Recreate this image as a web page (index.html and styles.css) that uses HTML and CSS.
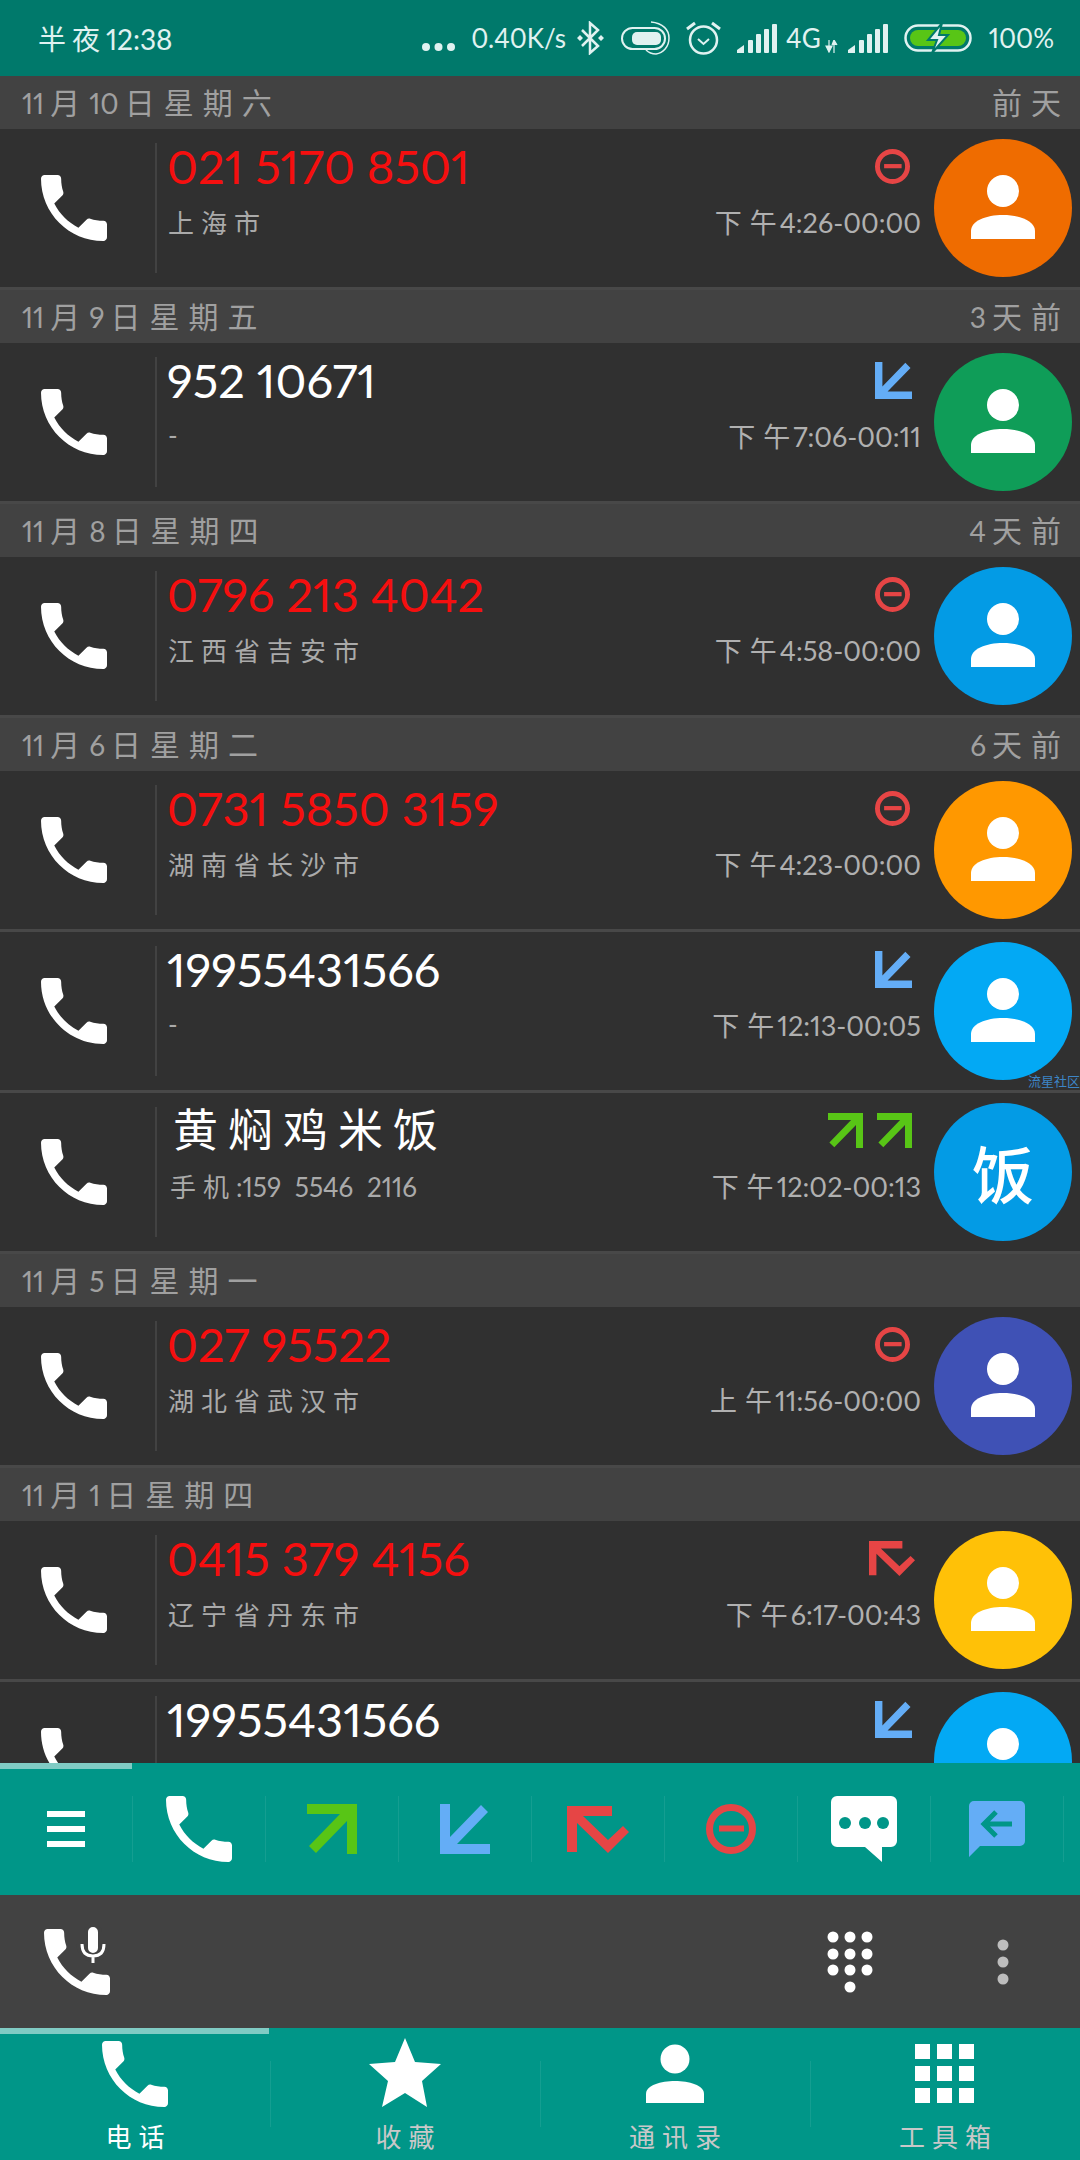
FILE: index.html
```html
<!DOCTYPE html>
<html lang="zh-CN">
<head>
    <meta charset="UTF-8">
    <meta name="viewport" content="width=device-width, initial-scale=1.0">
    <title>通话记录</title>
    <link rel="stylesheet" href="styles.css">
</head>
<body>
    <svg class="defs" width="0" height="0">
        <symbol id="phone" viewBox="3 3 18 18"><path d="M6.62 10.79c1.44 2.83 3.76 5.14 6.59 6.59l2.2-2.2c.27-.27.67-.36 1.02-.24 1.12.37 2.33.57 3.57.57.55 0 1 .45 1 1V20c0 .55-.45 1-1 1-9.39 0-17-7.61-17-17 0-.55.45-1 1-1h3.5c.55 0 1 .45 1 1 0 1.25.2 2.45.57 3.57.11.35.03.74-.25 1.02l-2.2 2.2z" fill="#fff"/></symbol>
        <symbol id="person" viewBox="0 0 138 138"><circle cx="69" cy="52" r="16" fill="#fff"/><path d="M37 100V92C37 82 52 76 69 76S101 82 101 92V100Z" fill="#fff"/></symbol>
        <symbol id="out" viewBox="0 0 50 50"><path d="M0 0H50V50H40V17L9 49L2 42L33 10H0Z" fill="#58c516"/></symbol>
        <symbol id="in" viewBox="0 0 50 50"><path d="M50 50H0V0H10V33L41 1L48 8L17 40H50Z" fill="#64adf6"/></symbol>
        <symbol id="missed" viewBox="0 0 62 47"><path d="M0 0H45V10H16L41 34L56 20L62 26L41 47L10 17V46H0Z" fill="#e64545"/></symbol>
        <symbol id="blocked" viewBox="0 0 50 50"><circle cx="25" cy="25" r="21.5" fill="none" stroke="#e64545" stroke-width="7"/><rect x="13" y="21.500" width="25" height="6" fill="#e64545"/></symbol>
        <symbol id="signal" viewBox="0 0 40 29"><path d="M0 29V26L7 21V29Z" fill="#e0f2f1"/><rect x="11" y="16" width="5" height="13" rx="1" fill="#e0f2f1"/><rect x="19" y="10" width="5" height="19" rx="1" fill="#e0f2f1"/><rect x="27" y="5" width="5" height="24" rx="1" fill="#e0f2f1"/><rect x="35" y="0" width="5" height="29" rx="1" fill="#e0f2f1"/></symbol>
    </svg>

    <header class="status-bar">
        <div class="status-time"><span class="cn">半夜</span>12:38</div>
        <div class="status-icons">
            <svg width="35" height="10" viewBox="0 0 35 10"><circle cx="5" cy="5" r="4" fill="#e0f2f1"/><circle cx="17.500" cy="5" r="4" fill="#e0f2f1"/><circle cx="30" cy="5" r="4" fill="#e0f2f1"/></svg>
            <span class="status-speed">0.40K/s</span>
            <svg width="29" height="34" viewBox="0 0 29 34"><path d="M6 9L22 25L14 32V2L22 9L6 25" fill="none" stroke="#e0f2f1" stroke-width="2.500"/><path d="M1 17L4 14L7 17L4 20ZM22 17L25 14L28 17L25 20Z" fill="#e0f2f1"/></svg>
            <svg width="50" height="34" viewBox="0 0 50 34"><rect x="1" y="7" width="43" height="21" rx="10.500" fill="none" stroke="#e0f2f1" stroke-width="2"/><rect x="11" y="11" width="29" height="13" rx="5" fill="#e0f2f1"/><path d="M30 1C42 2 48 9 48 17C48 26 42 32 35 33C31 33 28 32 25 29" fill="none" stroke="#e0f2f1" stroke-width="1.500"/></svg>
            <svg width="35" height="34" viewBox="0 0 35 34"><circle cx="17.500" cy="19" r="13.500" fill="none" stroke="#e0f2f1" stroke-width="2.500"/><path d="M12 18L17.500 23L23 18" fill="none" stroke="#e0f2f1" stroke-width="2"/><path d="M1 8L9 2M34 8L26 2" stroke="#e0f2f1" stroke-width="3"/></svg>
            <svg class="signal" width="40" height="29"><use href="#signal"/></svg>
            <span class="status-4g">4G</span>
            <svg class="status-arrows" width="13" height="13" viewBox="0 0 13 13"><path d="M4 0V9M1 6L4 12L7 6ZM9 13V1M7 5L9 0L12 5" fill="#e0f2f1" stroke="#e0f2f1" stroke-width="1.200"/></svg>
            <svg class="signal" width="40" height="29"><use href="#signal"/></svg>
            <svg class="status-battery" width="68" height="30" viewBox="0 0 68 30"><rect x="1.500" y="2.500" width="65" height="25" rx="12.500" fill="none" stroke="#e0f2f1" stroke-width="2.500"/><rect x="6" y="7" width="56" height="16" rx="8" fill="#58c516"/><path d="M38 0L24 17H33L28 30L44 12H35Z" fill="#e0f2f1" stroke="#00796b" stroke-width="2"/></svg>
            <span class="status-battery-text">100%</span>
        </div>
    </header>

    <main class="log">
        <div class="day"><span>11<span class="cn">月</span>10<span class="cn">日星期六</span></span><span><span class="cn">前天</span></span></div>
        <div class="row">
            <div class="row-call"><svg width="66" height="66"><use href="#phone"/></svg></div>
            <div class="row-info">
                <div class="row-top"><span class="number missed-text">021 5170 8501</span><svg class="kind" width="35" height="35"><use href="#blocked"/></svg></div>
                <div class="row-bottom"><span class="place"><span class="cn">上海市</span></span><span class="time"><span class="cn">下午</span>4:26-00:00</span></div>
            </div>
            <div class="avatar orange"><svg width="138" height="138"><use href="#person"/></svg></div>
        </div>

        <div class="day"><span>11<span class="cn">月</span>9<span class="cn">日星期五</span></span><span>3<span class="cn">天前</span></span></div>
        <div class="row">
            <div class="row-call"><svg width="66" height="66"><use href="#phone"/></svg></div>
            <div class="row-info">
                <div class="row-top"><span class="number">952 10671</span><svg class="kind kind-in" width="37" height="37"><use href="#in"/></svg></div>
                <div class="row-bottom"><span class="place">-</span><span class="time"><span class="cn">下午</span>7:06-00:11</span></div>
            </div>
            <div class="avatar green"><svg width="138" height="138"><use href="#person"/></svg></div>
        </div>

        <div class="day"><span>11<span class="cn">月</span>8<span class="cn">日星期四</span></span><span>4<span class="cn">天前</span></span></div>
        <div class="row">
            <div class="row-call"><svg width="66" height="66"><use href="#phone"/></svg></div>
            <div class="row-info">
                <div class="row-top"><span class="number missed-text">0796 213 4042</span><svg class="kind" width="35" height="35"><use href="#blocked"/></svg></div>
                <div class="row-bottom"><span class="place"><span class="cn">江西省吉安市</span></span><span class="time"><span class="cn">下午</span>4:58-00:00</span></div>
            </div>
            <div class="avatar blue"><svg width="138" height="138"><use href="#person"/></svg></div>
        </div>

        <div class="day"><span>11<span class="cn">月</span>6<span class="cn">日星期二</span></span><span>6<span class="cn">天前</span></span></div>
        <div class="row">
            <div class="row-call"><svg width="66" height="66"><use href="#phone"/></svg></div>
            <div class="row-info">
                <div class="row-top"><span class="number missed-text">0731 5850 3159</span><svg class="kind" width="35" height="35"><use href="#blocked"/></svg></div>
                <div class="row-bottom"><span class="place"><span class="cn">湖南省长沙市</span></span><span class="time"><span class="cn">下午</span>4:23-00:00</span></div>
            </div>
            <div class="avatar amber"><svg width="138" height="138"><use href="#person"/></svg></div>
        </div>
        <div class="row">
            <div class="row-call"><svg width="66" height="66"><use href="#phone"/></svg></div>
            <div class="row-info">
                <div class="row-top"><span class="number">19955431566</span><svg class="kind kind-in" width="37" height="37"><use href="#in"/></svg></div>
                <div class="row-bottom"><span class="place">-</span><span class="time"><span class="cn">下午</span>12:13-00:05</span></div>
            </div>
            <div class="avatar sky"><svg width="138" height="138"><use href="#person"/></svg></div>
            <span class="watermark">流星社区</span>
        </div>
        <div class="row">
            <div class="row-call"><svg width="66" height="66"><use href="#phone"/></svg></div>
            <div class="row-info">
                <div class="row-top"><span class="name">黄焖鸡米饭</span><span class="kinds"><svg width="35" height="35"><use href="#out"/></svg><svg width="35" height="35"><use href="#out"/></svg></span></div>
                <div class="row-bottom"><span class="contact-sub"><span class="cn">手机</span>:159 5546 2116</span><span class="time"><span class="cn">下午</span>12:02-00:13</span></div>
            </div>
            <div class="avatar blue letter">饭</div>
        </div>

        <div class="day"><span>11<span class="cn">月</span>5<span class="cn">日星期一</span></span></div>
        <div class="row">
            <div class="row-call"><svg width="66" height="66"><use href="#phone"/></svg></div>
            <div class="row-info">
                <div class="row-top"><span class="number missed-text">027 95522</span><svg class="kind" width="35" height="35"><use href="#blocked"/></svg></div>
                <div class="row-bottom"><span class="place"><span class="cn">湖北省武汉市</span></span><span class="time"><span class="cn">上午</span>11:56-00:00</span></div>
            </div>
            <div class="avatar indigo"><svg width="138" height="138"><use href="#person"/></svg></div>
        </div>

        <div class="day"><span>11<span class="cn">月</span>1<span class="cn">日星期四</span></span></div>
        <div class="row">
            <div class="row-call"><svg width="66" height="66"><use href="#phone"/></svg></div>
            <div class="row-info">
                <div class="row-top"><span class="number missed-text">0415 379 4156</span><svg class="kind kind-missed" width="46" height="35"><use href="#missed"/></svg></div>
                <div class="row-bottom"><span class="place"><span class="cn">辽宁省丹东市</span></span><span class="time"><span class="cn">下午</span>6:17-00:43</span></div>
            </div>
            <div class="avatar yellow"><svg width="138" height="138"><use href="#person"/></svg></div>
        </div>
        <div class="row">
            <div class="row-call"><svg width="66" height="66"><use href="#phone"/></svg></div>
            <div class="row-info">
                <div class="row-top"><span class="number">19955431566</span><svg class="kind kind-in" width="37" height="37"><use href="#in"/></svg></div>
            </div>
            <div class="avatar sky"><svg width="138" height="138"><use href="#person"/></svg></div>
        </div>
    </main>

    <section class="filter-bar">
        <div class="filter-indicator"></div>
        <div class="filter-cells">
            <div class="filter-cell"><svg width="38" height="36" viewBox="0 0 38 36"><path d="M0 0H38V6H0ZM0 15H38V21H0ZM0 30H38V36H0Z" fill="#fff"/></svg></div>
            <div class="filter-cell"><svg width="66" height="66"><use href="#phone"/></svg></div>
            <div class="filter-cell"><svg width="50" height="50"><use href="#out"/></svg></div>
            <div class="filter-cell"><svg width="50" height="50"><use href="#in"/></svg></div>
            <div class="filter-cell"><svg width="62" height="47"><use href="#missed"/></svg></div>
            <div class="filter-cell"><svg width="50" height="50"><use href="#blocked"/></svg></div>
            <div class="filter-cell"><svg width="66" height="66" viewBox="0 0 66 66"><path d="M6 0H60A6 6 0 0 1 66 6V45A6 6 0 0 1 60 51H51V66L34 51H6A6 6 0 0 1 0 45V6A6 6 0 0 1 6 0Z" fill="#fff"/><circle cx="14" cy="27" r="6" fill="#009688"/><circle cx="34" cy="27" r="6" fill="#009688"/><circle cx="52" cy="27" r="6" fill="#009688"/></svg></div>
            <div class="filter-cell"><svg width="56" height="56" viewBox="0 0 56 56"><path d="M5 0H51A5 5 0 0 1 56 5V40A5 5 0 0 1 51 45H11L0 56V5A5 5 0 0 1 5 0Z" fill="#64adf6"/><path d="M27 11L15 23L27 35M16 23H43" fill="none" stroke="#009688" stroke-width="5"/></svg></div>
        </div>
    </section>

    <section class="dial-bar">
        <svg width="70" height="70" viewBox="0 0 70 70">
            <use href="#phone" x="0" y="2" width="66" height="66"/>
            <path d="M37 16C37 26 41 30 49 30S61 26 61 16" fill="none" stroke="#424242" stroke-width="9"/>
            <rect x="42" y="-2" width="14" height="30" rx="7" fill="#fff" stroke="#424242" stroke-width="4"/>
            <path d="M38 17C38 25 42 29 49 29S60 25 60 17M49 29V36" fill="none" stroke="#fff" stroke-width="3"/>
        </svg>
        <svg class="dial-pad" width="46" height="62" viewBox="0 0 46 62">
            <circle cx="6" cy="6" r="5.500" fill="#fff"/><circle cx="23" cy="6" r="5.500" fill="#fff"/><circle cx="40" cy="6" r="5.500" fill="#fff"/>
            <circle cx="6" cy="23" r="5.500" fill="#fff"/><circle cx="23" cy="23" r="5.500" fill="#fff"/><circle cx="40" cy="23" r="5.500" fill="#fff"/>
            <circle cx="6" cy="39" r="5.500" fill="#fff"/><circle cx="23" cy="39" r="5.500" fill="#fff"/><circle cx="40" cy="39" r="5.500" fill="#fff"/>
            <circle cx="23" cy="56" r="5.500" fill="#fff"/>
        </svg>
        <svg class="dial-more" width="12" height="46" viewBox="0 0 12 46">
            <circle cx="6" cy="6" r="5.500" fill="#bdbdbd"/><circle cx="6" cy="23" r="5.500" fill="#bdbdbd"/><circle cx="6" cy="40" r="5.500" fill="#bdbdbd"/>
        </svg>
    </section>

    <nav class="nav-bar">
        <div class="nav-indicator"></div>
        <div class="nav-cells">
            <div class="nav-cell active">
                <svg width="72" height="70" viewBox="0 0 72 70"><use href="#phone" x="3" y="3" width="66" height="66"/></svg>
                <span class="cn">电话</span>
            </div>
            <div class="nav-cell">
                <svg width="72" height="70" viewBox="0 0 72 70"><path d="M36 0L46 24L72 26L53 43L58 69L36 55L13 69L19 43L0 26L26 24Z" fill="#fff"/></svg>
                <span class="cn">收藏</span>
            </div>
            <div class="nav-cell">
                <svg width="72" height="70" viewBox="0 0 72 70"><circle cx="36" cy="21" r="14.500" fill="#fff"/><path d="M7 65V56C7 47 22 43 36 43S65 47 65 56V65Z" fill="#fff"/></svg>
                <span class="cn">通讯录</span>
            </div>
            <div class="nav-cell">
                <svg width="72" height="70" viewBox="0 0 72 70"><path d="M6 6H21V21H6ZM28 6H43V21H28ZM50 6H65V21H50ZM6 28H21V43H6ZM28 28H43V43H28ZM50 28H65V43H50ZM6 50H21V65H6ZM28 50H43V65H28ZM50 50H65V65H50Z" fill="#fff"/></svg>
                <span class="cn">工具箱</span>
            </div>
        </div>
    </nav>
</body>
</html>
```

FILE: styles.css
```css
* {
    box-sizing: border-box;
    margin: 0;
    padding: 0;
}

body {
    width: 1080px;
    height: 2160px;
    display: flex;
    flex-direction: column;
    overflow: hidden;
    background-color: #303030;
    font-family: Lato, "Noto Sans CJK SC", sans-serif;
    font-variant-numeric: proportional-nums;
}

.defs {
    position: absolute;
}

svg {
    display: block;
    flex-shrink: 0;
}

.cn {
    letter-spacing: 7px;
}

/* status bar */
.status-bar {
    height: 76px;
    display: flex;
    justify-content: space-between;
    align-items: center;
    background-color: #00796b;
    color: #e0f2f1;
    font-size: 27px;
    padding: 0 26px 0 38px;
}

.status-time {
    font-size: 28px;
}

.status-time .cn {
    letter-spacing: 6px;
}

.status-icons {
    display: flex;
    align-items: center;
    font-size: 26px;
}

.status-icons > svg:first-child {
    margin-top: 18px;
}

.status-speed {
    margin-left: 15px;
    margin-right: 10px;
}

.status-icons svg:nth-of-type(3) {
    margin-left: 16px;
}

.status-icons svg:nth-of-type(4) {
    margin-left: 15px;
}

.signal {
    margin-left: 16px;
}

.status-4g {
    margin-left: 9px;
}

.status-arrows {
    margin-left: 4px;
    margin-top: 16px;
}

.status-arrows + .signal {
    margin-left: 10px;
}

.status-battery {
    margin-left: 16px;
}

.status-battery-text {
    margin-left: 17px;
}

/* call log */
.log {
    flex: 1;
    overflow: hidden;
}

.day {
    height: 53px;
    display: flex;
    justify-content: space-between;
    align-items: center;
    padding: 0 10px 3px 22px;
    background-color: #424242;
    color: #a0a0a0;
    font-size: 28px;
}

.day .cn {
    font-size: 30px;
    letter-spacing: 9px;
    margin-left: 6px;
}

.row {
    position: relative;
    height: 161px;
    display: flex;
    background-color: #303030;
    border-bottom: 3px solid #484848;
}

.row-call {
    width: 155px;
    display: flex;
    justify-content: center;
    align-items: center;
    padding-right: 8px;
}

.row-info {
    flex: 1;
    height: 130px;
    margin-top: 14px;
    padding: 0 13px 0 10px;
    border-left: 2px solid #424242;
}

.row-top {
    height: 47px;
    display: flex;
    justify-content: space-between;
    align-items: center;
}

.number {
    font-size: 47px;
    line-height: 47px;
    color: #fff;
}

.missed-text {
    color: #f50f0f;
}

.name {
    font-size: 45px;
    line-height: 47px;
    letter-spacing: 10px;
    margin-left: 6px;
    color: #fff;
}

.kind {
    margin-right: 11px;
}

.kind-in {
    margin-right: 9px;
}

.kind-missed {
    margin-right: 6px;
}

.kinds {
    display: flex;
    gap: 14px;
    margin-right: 9px;
}

.row-bottom {
    height: 34px;
    margin-top: 14px;
    display: flex;
    justify-content: space-between;
    align-items: center;
    font-size: 26px;
    color: #aaa;
}

.place {
    margin-left: 1px;
}

.contact-sub {
    margin-left: 3px;
    word-spacing: 7px;
}

.time {
    font-size: 27px;
    color: #b0b0b0;
}

.time .cn {
    letter-spacing: 8px;
    margin-right: -5px;
}

.avatar {
    width: 138px;
    height: 138px;
    margin: 10px 8px 0 0;
    border-radius: 50%;
}

.letter {
    display: flex;
    justify-content: center;
    align-items: center;
    font-size: 62px;
    font-weight: 500;
    color: #fff;
}

.orange { background-color: #ef6c00; }
.green { background-color: #0f9d58; }
.blue { background-color: #039be5; }
.amber { background-color: #ff9800; }
.sky { background-color: #03a9f4; }
.indigo { background-color: #3f51b5; }
.yellow { background-color: #ffc107; }

.watermark {
    position: absolute;
    right: 0;
    bottom: 2px;
    font-size: 13px;
    line-height: 14px;
    color: #3d85c6;
}

/* filter bar */
.filter-bar {
    height: 132px;
    background-color: #009688;
}

.filter-indicator {
    width: 132px;
    height: 6px;
    background-color: #80cbc4;
}

.filter-cells {
    display: flex;
    margin-top: 27px;
}

.filter-cell {
    width: 133px;
    height: 66px;
    display: flex;
    justify-content: center;
    align-items: center;
    border-right: 1px solid rgba(255, 255, 255, 0.08);
}

/* dial bar */
.dial-bar {
    height: 133px;
    display: flex;
    align-items: center;
    padding-left: 44px;
    background-color: #424242;
}

.dial-pad {
    margin-left: 713px;
}

.dial-more {
    margin-left: 124px;
}

/* bottom nav */
.nav-bar {
    height: 132px;
    background-color: #009688;
}

.nav-indicator {
    width: 269px;
    height: 6px;
    background-color: #80cbc4;
}

.nav-cells {
    display: flex;
    padding-top: 4px;
}

.nav-cell {
    position: relative;
    width: 270px;
    display: flex;
    flex-direction: column;
    align-items: center;
    color: #c8c8c8;
    font-size: 26px;
    line-height: 34px;
}

.nav-cell svg {
    margin-bottom: 12px;
}

.nav-cell.active {
    color: #fff;
}

.nav-cell .cn {
    margin-left: 7px;
}

.nav-cell + .nav-cell::before {
    content: "";
    position: absolute;
    left: 0;
    top: 23px;
    height: 66px;
    border-left: 1px solid rgba(255, 255, 255, 0.08);
}
```
